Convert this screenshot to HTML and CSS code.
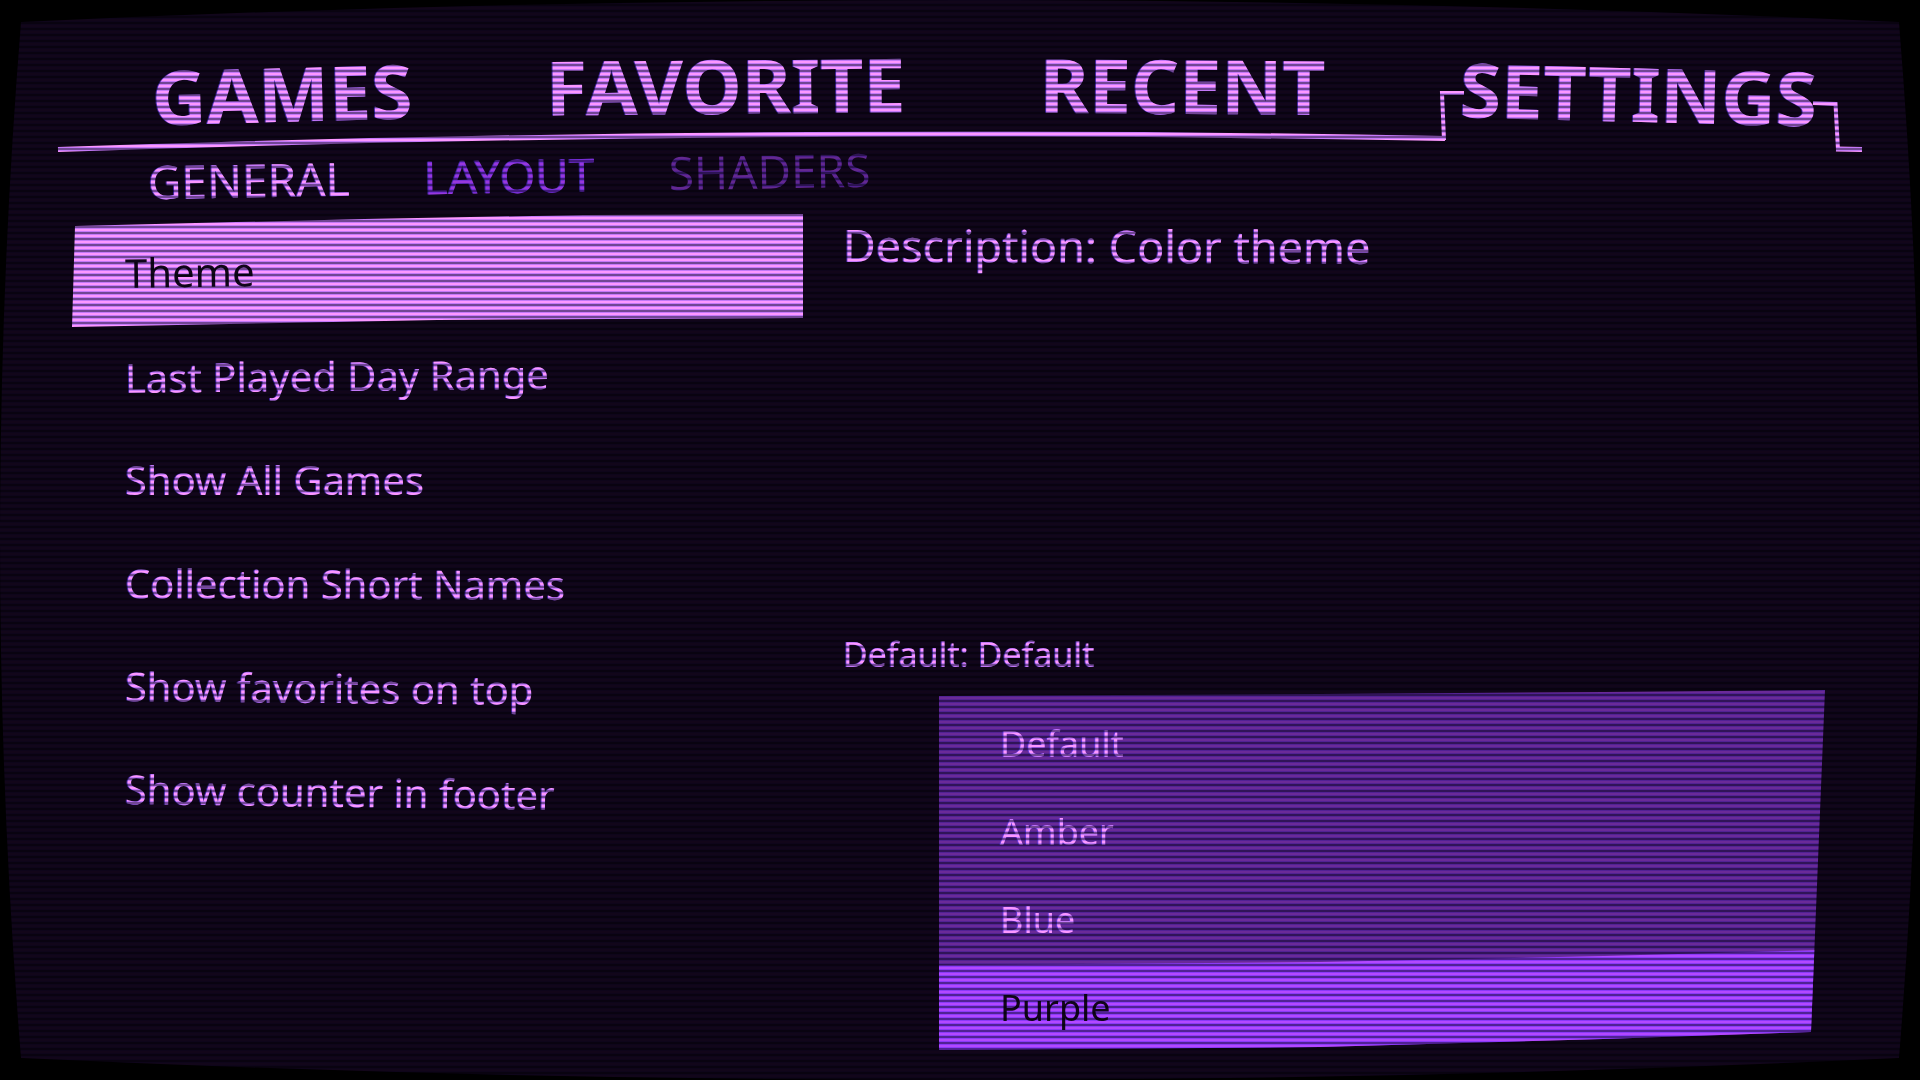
FILE: index.html
```html
<!DOCTYPE html>
<html lang="en">
<head>
<meta charset="utf-8">
<title>Settings</title>
<link rel="stylesheet" href="styles.css">
</head>
<body>
<svg class="defs" aria-hidden="true" width="0" height="0">
  <clipPath id="tube" clipPathUnits="objectBoundingBox">
    <path transform="scale(0.000520833 0.000925926)" d="M21 22Q960 -22 1899 22Q1941 540 1899 1058Q960 1102 21 1058Q-21 540 21 22Z"/>
  </clipPath>
</svg>
<div class="screen">
  <header class="header">
    <svg class="rule" viewBox="0 0 1920 160" preserveAspectRatio="none" aria-hidden="true">
      <path d="M58 149.5Q751 125.7 1445 138.5" stroke-width="5"/>
      <path d="M1444 140L1442 93H1464" stroke-width="4"/>
      <path d="M1813 103L1835.500 104L1838 150" stroke-width="4"/>
      <path d="M1836 149L1862 149.500" stroke-width="5"/>
    </svg>
    <nav class="tabs">
      <a class="tab tab-outer tilt-left" href="#games">GAMES</a>
      <a class="tab tilt-left-slight" href="#favorite">FAVORITE</a>
      <a class="tab tilt-right-slight" href="#recent">RECENT</a>
      <a class="tab tab-outer tilt-right" href="#settings" aria-current="page">SETTINGS</a>
    </nav>
  </header>
  <nav class="subtabs">
    <a class="subtab active" href="#general">GENERAL</a>
    <a class="subtab" href="#layout">LAYOUT</a>
    <a class="subtab far" href="#shaders">SHADERS</a>
  </nav>
  <main class="content">
    <div class="settings">
      <button class="setting selected" type="button"><span class="name bend-1">Theme</span></button>
      <button class="setting" type="button"><span class="name bend-2">Last Played Day Range</span></button>
      <button class="setting" type="button"><span class="name">Show All Games</span></button>
      <button class="setting" type="button"><span class="name bend-3">Collection Short Names</span></button>
      <button class="setting" type="button"><span class="name bend-4">Show favorites on top</span></button>
      <button class="setting" type="button"><span class="name bend-5">Show counter in footer</span></button>
    </div>
    <section class="detail">
      <p class="description"><span class="description-text">Description: Color theme</span></p>
      <p class="default">Default: Default</p>
      <div class="options" role="radiogroup" aria-label="Theme">
        <label class="option"><input class="radio" type="radio" name="theme">Default</label>
        <label class="option"><input class="radio" type="radio" name="theme">Amber</label>
        <label class="option"><input class="radio" type="radio" name="theme">Blue</label>
        <label class="option chosen"><input class="radio" type="radio" name="theme" checked>Purple</label>
      </div>
    </section>
  </main>
</div>
</body>
</html>
```
FILE: styles.css
```css
:root {
  --pink: #fc97ff;
  --violet: #b348ff;
  --panel: #6a2a98;
  --ink: #12061a;
}

* {
  box-sizing: border-box;
}

body {
  margin: 0;
  background: #000;
  color: var(--pink);
  font-family: "Noto Sans", sans-serif;
}

.defs {
  position: absolute;
}

.screen {
  position: relative;
  display: flex;
  flex-direction: column;
  min-height: 100vh;
  background: var(--ink);
  clip-path: url(#tube);
  text-shadow: -1px 0 rgba(110, 70, 255, 0.6);
}

/* scanlines */
.screen::after {
  content: "";
  position: absolute;
  inset: 0;
  pointer-events: none;
  mix-blend-mode: multiply;
  background: repeating-linear-gradient(
    to bottom,
    #c6cbf8 0 1px,
    #fff 1px 3px,
    #c6cbf8 3px 4px,
    #727694 4px 6px
  );
}

.header {
  position: relative;
  padding-top: 45px;
}

.rule {
  position: absolute;
  top: 0;
  left: 0;
  width: 100%;
  height: 160px;
  fill: none;
  stroke: var(--pink);
}

.tabs {
  position: relative;
  display: flex;
  justify-content: space-between;
  align-items: flex-start;
  padding: 0 103px 0 152px;
}

.tab {
  font-size: 75px;
  line-height: 80px;
  font-weight: 700;
  color: var(--pink);
  text-decoration: none;
}

.tab-outer {
  margin-top: 8px;
}

.tilt-left {
  rotate: -1.5deg;
}

.tilt-left-slight {
  rotate: -0.5deg;
}

.tilt-right-slight {
  rotate: 0.4deg;
}

.tilt-right {
  rotate: 1.5deg;
}

.subtabs {
  display: flex;
  align-self: flex-start;
  gap: 74px;
  margin: 14px 0 17px 148px;
  rotate: -1deg;
}

.subtab {
  font-size: 46px;
  line-height: 56px;
  color: #9838dc;
  text-decoration: none;
}

.subtab.active {
  color: var(--pink);
}

.subtab.far {
  color: #642890;
  text-shadow: none;
}

.content {
  flex: 1;
  display: grid;
  grid-template-columns: 731fr 982fr;
  gap: 40px;
  padding: 0 95px 30px 72px;
}

.settings {
  display: flex;
  flex-direction: column;
}

.setting {
  position: relative;
  height: 104px;
  padding: 0 53px;
  border: 0;
  background: none;
  color: var(--pink);
  font-family: inherit;
  font-size: 40px;
  line-height: 56px;
  text-align: left;
  text-shadow: inherit;
}

.selected {
  color: var(--ink);
  text-shadow: none;
}

.selected::before {
  content: "";
  position: absolute;
  inset: -6px 0 -3px 0;
  background: var(--pink);
  clip-path: polygon(3px 12px, 40% 5px, 70% 1px, 100% 0, 100% calc(100% - 9px), 50% calc(100% - 7px), 0 100%);
}

.name {
  position: relative;
  display: inline-block;
}

.bend-1 {
  rotate: -0.8deg;
}

.bend-2 {
  rotate: -0.5deg;
}

.bend-3 {
  rotate: 0.2deg;
}

.bend-4 {
  rotate: 0.5deg;
}

.bend-5 {
  rotate: 0.8deg;
}

.detail {
  display: flex;
  flex-direction: column;
}

.description {
  flex: 1;
  margin: 0;
  font-size: 45px;
  line-height: 52px;
}

.description-text {
  display: inline-block;
  rotate: 0.2deg;
}

.default {
  margin: 0 0 12px;
  font-size: 34px;
  line-height: 48px;
}

.options {
  margin-left: 96px;
  padding-top: 8px;
  background: var(--panel);
  clip-path: polygon(0 6px, 43% 4px, 75% 2px, 100% 0, calc(100% - 14px) calc(100% - 18px), 75% calc(100% - 11px), 43% calc(100% - 3px), 0 100%);
}

.option {
  display: flex;
  align-items: center;
  height: 88px;
  padding: 3px 0 0 61px;
  font-size: 36px;
}

.chosen {
  height: 100px;
  margin-top: -12px;
  padding-top: 15px;
  background: var(--violet);
  color: var(--ink);
  text-shadow: none;
  clip-path: polygon(0 15px, 43% 12px, 75% 6px, 100% 0, 100% 100%, 0 100%);
}

.radio {
  appearance: none;
  width: 0;
  height: 0;
  margin: 0;
}
```
